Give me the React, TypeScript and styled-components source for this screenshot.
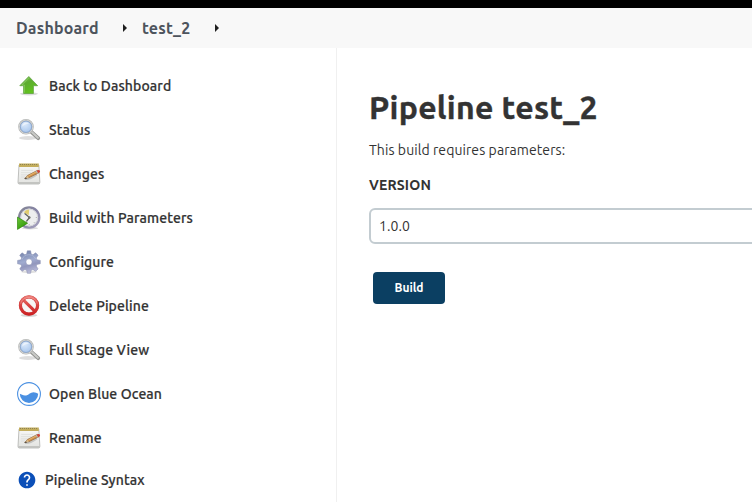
import React from "react";
import styled, { createGlobalStyle } from "styled-components";

const GlobalStyle = createGlobalStyle`
  * { box-sizing: border-box; }
  html, body, #root { height: 100%; }
  body {
    margin: 0;
    overflow: hidden;
    background: #fff;
    color: #333;
    font-family: Ubuntu, "Noto Sans", sans-serif;
    font-size: 14px;
  }
`;

const Page = styled.div`
  display: flex;
  flex-direction: column;
  height: 502px;
  overflow: hidden;
`;

const TopBar = styled.div`
  flex: none;
  height: 8px;
  background: #000;
`;

const Breadcrumbs = styled.nav`
  flex: none;
  display: flex;
  align-items: center;
  height: 40px;
  padding-left: 16px;
  background: #f8f8f8;
`;

const Crumb = styled.a<{ $width: number }>`
  width: ${(p) => p.$width}px;
  color: #4d545d;
  font-size: 16px;
  font-weight: 700;
  line-height: 24px;
  letter-spacing: 0.17px;
  white-space: nowrap;
`;

const CrumbArrow = styled.span`
  width: 0;
  height: 0;
  margin: 0 15px 0 25px;
  border: solid transparent;
  border-width: 4px 0 4px 4px;
  border-left-color: #1f1f1f;
`;

const Body = styled.div`
  flex: 1;
  display: flex;
  min-height: 0;
`;

const Sidebar = styled.aside`
  flex: none;
  width: 337px;
  padding: 16px 0 0 17px;
  border-right: 1px solid #f0f0f0;
`;

const Task = styled.a<{ $compact?: boolean }>`
  display: flex;
  align-items: center;
  gap: 8px;
  height: ${(p) => (p.$compact ? 40 : 44)}px;
  svg { flex: none; }
`;

const TaskLabel = styled.span`
  font-weight: 500;
  line-height: 20px;
  letter-spacing: 0.11px;
  -webkit-text-stroke: 0.2px currentColor;
  white-space: nowrap;
`;

const Main = styled.main`
  flex: 1;
  min-width: 0;
  padding: 37px 0 0 32px;
`;

const Title = styled.h1`
  margin: 0;
  font-size: 32px;
  font-weight: 700;
  line-height: 44px;
  letter-spacing: 0.28px;
  -webkit-text-stroke: 0.4px currentColor;
  white-space: nowrap;
`;

const Intro = styled.p`
  margin: 11px 0 0;
  line-height: 20px;
  letter-spacing: 0.08px;
`;

const FieldName = styled.label`
  display: block;
  margin-top: 15px;
  font-weight: 700;
  line-height: 20px;
  letter-spacing: 0.15px;
`;

const Field = styled.input`
  display: block;
  width: 420px;
  height: 36px;
  margin-top: 13px;
  padding: 0 8px;
  border: 2px solid #c3ccd1;
  border-radius: 6px;
  background: #fff;
  color: #333;
  font: inherit;
  letter-spacing: 0.08px;
  outline: none;
`;

const BuildButton = styled.button`
  display: block;
  width: 72px;
  height: 32px;
  margin: 28px 0 0 4px;
  padding: 0 0 1px;
  border: 0;
  border-radius: 4px;
  background: #0b3f62;
  color: #fff;
  font-family: inherit;
  font-size: 12px;
  font-weight: 700;
`;

const UpIcon = () => (
  <svg width="24" height="24" viewBox="0 0 24 24">
    <defs>
      <linearGradient id="up" x1="0" y1="0" x2="0.6" y2="1">
        <stop offset="0" stopColor="#8fd065" />
        <stop offset="0.45" stopColor="#5dac30" />
        <stop offset="1" stopColor="#62c41d" />
      </linearGradient>
    </defs>
    <ellipse cx="12" cy="19.8" rx="9" ry="1.6" fill="#000" opacity="0.14" />
    <path d="M11.8 2.5 20.6 11.7H16.4V19.5H6.6V11.7H2.8Z" fill="url(#up)" stroke="#62a542" strokeWidth="0.8" strokeLinejoin="round" />
    <path d="M11.8 3.9 5 11H7.5V18.7" fill="none" stroke="#b5e890" strokeWidth="0.7" opacity="0.5" />
  </svg>
);

const SearchIcon = () => (
  <svg width="24" height="24" viewBox="0 0 24 24">
    <defs>
      <radialGradient id="lens" cx="0.42" cy="0.3" r="0.75">
        <stop offset="0" stopColor="#dceafb" />
        <stop offset="0.6" stopColor="#b8d1f1" />
        <stop offset="1" stopColor="#a3c2ea" />
      </radialGradient>
    </defs>
    <ellipse cx="11" cy="20" rx="9" ry="1.9" fill="#000" opacity="0.13" />
    <path d="M14.3 13.8 21.2 20.2" stroke="#929390" strokeWidth="3.8" strokeLinecap="round" />
    <path d="M14.8 14.1 20.9 19.7" stroke="#c9cac7" strokeWidth="2" strokeLinecap="round" />
    <circle cx="9" cy="8.8" r="6.8" fill="url(#lens)" stroke="#b0b2b0" strokeWidth="2" />
    <circle cx="9" cy="8.8" r="6.8" fill="none" stroke="#e2e3e2" strokeWidth="0.7" />
    <circle cx="9" cy="8.8" r="5.6" fill="none" stroke="#7e9ecd" strokeWidth="0.7" />
    <path d="M5 8.7A4.2 4.2 0 0 1 12.2 5.8Q8 5.6 5 8.7" fill="#fff" opacity="0.5" />
  </svg>
);

const NotepadIcon = () => (
  <svg width="24" height="24" viewBox="0 0 24 24">
    <defs>
      <linearGradient id="paper" x1="0" y1="0" x2="0" y2="1">
        <stop offset="0" stopColor="#f8f8f7" />
        <stop offset="1" stopColor="#e2e3e0" />
      </linearGradient>
    </defs>
    <path d="M2 3H21.8L22.9 20.3Q22.9 22 21.5 22H2.3Q1 22 1 20.3Z" fill="url(#paper)" stroke="#b0b1ae" strokeWidth="0.8" />
    <path d="M1.5 20.3H22.5V21.5H1.5Z" fill="#b5b6b3" />
    <path d="M2 1.5H21.8V5H2Z" fill="#c3ad5c" />
    <path d="M3 2.5H21" stroke="#8d8252" strokeWidth="1" strokeDasharray="1 1" />
    <path d="M4.2 8.4H16M4 10.6H14M4 12.8H11M4 15H8" stroke="#dcdddb" strokeWidth="0.8" />
    <path d="M8 17.2Q13 17.6 20 12.5" stroke="#000" strokeWidth="1.7" opacity="0.16" fill="none" />
    <path d="M7.8 16.4 11 13.2 20.4 8.4 22 10.7 12.2 15.6Z" fill="#d2934a" stroke="#8a5f35" strokeWidth="0.7" />
    <path d="M11.4 13.9 19.5 9.7" stroke="#f0c67e" strokeWidth="0.7" />
    <path d="m19.4 8.9 1.8-.9q1.5-.2 1.9 1.2.1 1-.9 1.4l-1.3.7Z" fill="#cf463a" />
    <path d="m18.7 9.3 1-.5 1.3 2.4-1 .5Z" fill="#b7bbb8" />
    <path d="m7.5 16.7 3.1-2.7 1.4 1.6Z" fill="#dcc293" />
    <path d="m7.1 17 2-1.6.9 1Z" fill="#333" />
  </svg>
);

const ClockIcon = () => (
  <svg width="24" height="24" viewBox="0 0 24 24">
    <defs>
      <linearGradient id="rim" x1="0" y1="0" x2="1" y2="1">
        <stop offset="0" stopColor="#858795" />
        <stop offset="0.5" stopColor="#8583a5" />
        <stop offset="1" stopColor="#aaa6c1" />
      </linearGradient>
      <linearGradient id="play" x1="0" y1="0" x2="0.7" y2="1">
        <stop offset="0" stopColor="#6cc93a" />
        <stop offset="1" stopColor="#2f9606" />
      </linearGradient>
    </defs>
    <ellipse cx="13" cy="22.2" rx="8" ry="1.2" fill="#000" opacity="0.14" />
    <circle cx="12.2" cy="11.5" r="10.1" fill="#eeefef" stroke="url(#rim)" strokeWidth="2.3" />
    <circle cx="12.2" cy="11.5" r="8.4" fill="none" stroke="#c8c9d1" strokeWidth="0.7" />
    <path d="M11.7 9.2 6.8 6.3Q8.5 3.9 12.2 3.6Z" fill="#e1cd70" />
    <path d="M20 11.5H18.8M17.7 17l-.8-.8M12.2 19.2V18" stroke="#a8aaa5" strokeWidth="0.8" />
    <path d="M8 7.7 12.6 11.5 9.7 15" fill="none" stroke="#5f605c" strokeWidth="1.2" strokeLinecap="round" />
    <circle cx="12.3" cy="11.5" r="1.2" fill="#6d6e6a" />
    <path d="M.5 11.1 10.6 17.2.5 23.4Z" fill="url(#play)" stroke="#34890f" strokeWidth="0.7" strokeLinejoin="round" />
  </svg>
);

const GearIcon = () => (
  <svg width="24" height="24" viewBox="0 0 24 24">
    <defs>
      <linearGradient id="gear" x1="0.3" y1="0" x2="0.6" y2="1">
        <stop offset="0" stopColor="#7483aa" />
        <stop offset="0.45" stopColor="#a1acd0" />
        <stop offset="0.65" stopColor="#9297bd" />
        <stop offset="1" stopColor="#bfc0dc" />
      </linearGradient>
    </defs>
    <ellipse cx="12" cy="21.8" rx="8" ry="1.5" fill="#000" opacity="0.12" />
    <path
      fillRule="evenodd"
      d="M10.3.8h3.3l.6 3.3 1.7.7 2.8-2 2.4 2.4-1.9 2.8.7 1.8 3.4.6v3.4l-3.4.6-.7 1.7 1.9 2.8-2.4 2.4-2.8-1.9-1.7.7-.6 3.2h-3.3l-.7-3.2-1.7-.7-2.8 1.9-2.4-2.4 2-2.8-.8-1.7-3.3-.6v-3.4l3.3-.6.8-1.8-2-2.8L5.1 2.8l2.8 2 1.7-.7ZM12 8.8a3.1 3.1 0 1 0 0 6.2 3.1 3.1 0 1 0 0-6.2Z"
      fill="url(#gear)"
      stroke="#858bae"
      strokeWidth="0.5"
      strokeLinejoin="round"
    />
    <path d="M5 9.4A7.5 7.5 0 0 1 18.8 9.2" fill="none" stroke="#c5cee8" strokeWidth="1" opacity="0.45" />
  </svg>
);

const ForbiddenIcon = () => (
  <svg width="24" height="24" viewBox="0 0 24 24">
    <defs>
      <linearGradient id="stop" gradientUnits="userSpaceOnUse" x1="0" y1="2" x2="0" y2="21">
        <stop offset="0" stopColor="#ec7c76" />
        <stop offset="0.5" stopColor="#da4140" />
        <stop offset="1" stopColor="#cc2023" />
      </linearGradient>
    </defs>
    <ellipse cx="12" cy="21.3" rx="8.5" ry="1.6" fill="#000" opacity="0.16" />
    <circle cx="12" cy="11.5" r="8.6" fill="#f7f5f5" />
    <path d="M6 5.6 18 17.4" stroke="url(#stop)" strokeWidth="3" />
    <circle cx="12" cy="11.5" r="8.6" fill="none" stroke="#c93a3b" strokeWidth="3.2" />
    <circle cx="12" cy="11.5" r="8.6" fill="none" stroke="url(#stop)" strokeWidth="2.6" />
    <path d="M3.6 9.6A8.8 8.8 0 0 1 20.4 9.6" fill="none" stroke="#f9b3ad" strokeWidth="0.8" opacity="0.5" />
  </svg>
);

const OceanIcon = () => (
  <svg width="24" height="24" viewBox="0 0 24 24">
    <circle cx="12" cy="12" r="11.4" fill="#fff" stroke="#4a90e2" strokeWidth="1.1" />
    <path d="M2.8 11.8C4.6 12.6 6.4 13.9 9.2 13.4 12 12.8 13.4 10.4 16.4 10.3 18.6 10.3 19.8 11.4 21.2 11.8A9.2 9.2 0 0 1 2.8 11.8Z" fill="#4a90e2" />
  </svg>
);

const HelpIcon = () => (
  <svg width="20" height="20" viewBox="0 0 24 24">
    <path
      fill="#0b4fb8"
      d="M12 2C6.48 2 2 6.48 2 12s4.48 10 10 10 10-4.48 10-10S17.52 2 12 2zm1 17h-2v-2h2v2zm2.07-7.75-.9.92C13.45 12.9 13 13.5 13 15h-2v-.5c0-1.1.45-2.1 1.17-2.83l1.24-1.26c.37-.36.59-.86.59-1.41 0-1.1-.9-2-2-2s-2 .9-2 2H8c0-2.21 1.79-4 4-4s4 1.79 4 4c0 .88-.36 1.68-.93 2.25z"
    />
  </svg>
);

const tasks = [
  { label: "Back to Dashboard", Icon: UpIcon },
  { label: "Status", Icon: SearchIcon },
  { label: "Changes", Icon: NotepadIcon },
  { label: "Build with Parameters", Icon: ClockIcon },
  { label: "Configure", Icon: GearIcon },
  { label: "Delete Pipeline", Icon: ForbiddenIcon },
  { label: "Full Stage View", Icon: SearchIcon },
  { label: "Open Blue Ocean", Icon: OceanIcon },
  { label: "Rename", Icon: NotepadIcon },
];

export default function App() {
  return (
    <Page>
      <GlobalStyle />
      <TopBar />
      <Breadcrumbs>
        <Crumb $width={82}>Dashboard</Crumb>
        <CrumbArrow />
        <Crumb $width={48}>test_2</Crumb>
        <CrumbArrow />
      </Breadcrumbs>
      <Body>
        <Sidebar>
          {tasks.map(({ label, Icon }) => (
            <Task key={label}>
              <Icon />
              <TaskLabel>{label}</TaskLabel>
            </Task>
          ))}
          <Task $compact>
            <HelpIcon />
            <TaskLabel>Pipeline Syntax</TaskLabel>
          </Task>
        </Sidebar>
        <Main>
          <Title>Pipeline test_2</Title>
          <Intro>This build requires parameters:</Intro>
          <FieldName htmlFor="version">VERSION</FieldName>
          <Field id="version" defaultValue="1.0.0" />
          <BuildButton type="button">Build</BuildButton>
        </Main>
      </Body>
    </Page>
  );
}
